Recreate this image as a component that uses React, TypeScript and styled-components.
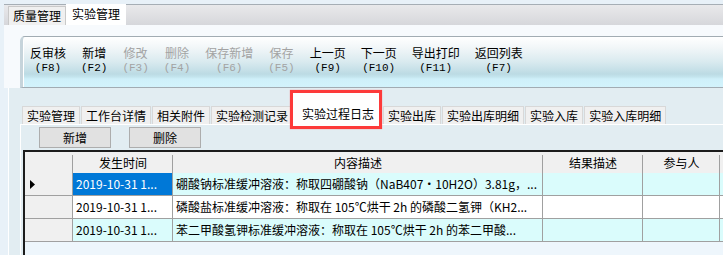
import React from "react";
import styled, { createGlobalStyle } from "styled-components";

const Global = createGlobalStyle`
  html, body {
    margin: 0;
    padding: 0;
  }
  body {
    font-family: "Noto Sans CJK SC", "Liberation Sans", sans-serif;
    font-size: 12px;
    color: #000;
    background: #e8f1f8;
  }
`;

const Root = styled.div`
  width: 723px;
  height: 255px;
  overflow: hidden;
  padding-left: 4px;
  box-sizing: border-box;
  display: flex;
  flex-direction: column;
  background: #e8f1f8;
`;

const TopBar = styled.div`
  margin-top: 4px;
  height: 21px;
  box-sizing: border-box;
  border-top: 1px solid #a6aeb5;
  background: linear-gradient(#e9e9eb, #d6d7db);
  display: flex;
  align-items: flex-end;
  padding-left: 4px;
`;

const TopTab = styled.div<{ $active?: boolean }>`
  height: ${(p) => (p.$active ? "21px" : "19px")};
  margin-top: ${(p) => (p.$active ? "-1px" : "0")};
  line-height: ${(p) => (p.$active ? "20px" : "18px")};
  padding: 0 ${(p) => (p.$active ? "6px" : "4px")};
  box-sizing: border-box;
  background: ${(p) => (p.$active ? "#ffffff" : "#f0f0f0")};
  border: ${(p) => (p.$active ? "none" : "1px solid #c9c9c9")};
  border-bottom: none;
  font-size: 12px;
`;

const ToolbarArea = styled.div`
  height: 63px;
  box-sizing: border-box;
  padding: 11px 0 0 16px;
  background: #f7fafd;
`;

const Toolbar = styled.div`
  height: 52px;
  box-sizing: border-box;
  border-top: 1px solid #a2acb3;
  border-bottom: 1px solid #a2acb3;
  border-left: 3px solid #c6d4db;
  border-top-left-radius: 5px;
  box-shadow: inset 1px 0 0 #ffffff;
  background: linear-gradient(
    #ffffff 0%,
    #f1f6f8 22%,
    #d9eaef 50%,
    #bcdbe4 74%,
    #c4e5ee 80%,
    #cff0fa 84%,
    #d3f3fc 100%
  );
  display: flex;
  align-items: flex-start;
  gap: 15px;
  padding: 8px 0 0 7px;
`;

const ToolButton = styled.div<{ $disabled?: boolean }>`
  display: flex;
  flex-direction: column;
  align-items: center;
  color: ${(p) => (p.$disabled ? "#a3a3a3" : "#000")};
`;

const ToolLabel = styled.span`
  display: block;
  font-size: 12px;
  line-height: 16px;
  white-space: nowrap;
`;

const ToolKey = styled.span`
  display: block;
  margin-top: 1px;
  font-family: "Liberation Mono", "DejaVu Sans Mono", monospace;
  font-size: 11px;
  line-height: 12px;
  white-space: nowrap;
`;

const Lower = styled.div`
  flex: 1;
  margin-left: 4px;
  border-left: 1px solid #ffffff;
  background: #e2edf2;
  display: flex;
  flex-direction: column;
  padding-top: 18px;
  min-height: 0;
`;

const SubTabs = styled.div`
  height: 18px;
  margin-left: 13px;
  display: flex;
  align-items: flex-end;
  gap: 1px;
`;

const SubTab = styled.div`
  height: 18px;
  box-sizing: border-box;
  padding: 0 4px;
  line-height: 17px;
  background: #f0f0f0;
  border: 1px solid #d8d8d8;
  border-bottom: none;
  white-space: nowrap;
`;

const ActiveSubTab = styled.div`
  position: relative;
  z-index: 1;
  height: 21px;
  box-sizing: border-box;
  margin-left: 1px;
  padding: 0 8px 0 7px;
  line-height: 21px;
  background: #ffffff;
  white-space: nowrap;

  &::before {
    content: "";
    position: absolute;
    left: -5px;
    top: -13px;
    width: 92px;
    height: 39px;
    box-sizing: border-box;
    background: #ffffff;
    z-index: -1;
  }

  &::after {
    content: "";
    position: absolute;
    left: -5px;
    top: -13px;
    width: 92px;
    height: 39px;
    box-sizing: border-box;
    border: 3px solid #fd3a3a;
    box-shadow: 0 0 1px rgba(255, 60, 60, 0.6);
  }
`;

const Page = styled.div`
  flex: 1;
  margin-left: 11px;
  border-top: 1px solid #ffffff;
  border-left: 1px solid #ffffff;
  padding-top: 2px;
  display: flex;
  flex-direction: column;
  min-height: 0;
`;

const ButtonRow = styled.div`
  display: flex;
  gap: 18px;
  padding-left: 18px;
`;

const PlainButton = styled.div`
  width: 72px;
  height: 21px;
  box-sizing: border-box;
  border: 1px solid #adadad;
  background: #e1e1e1;
  text-align: center;
  line-height: 19px;
`;

const Grid = styled.div`
  flex: 1;
  margin: 2px 0 0 2px;
  border-top: 2px solid #1c1c1c;
  border-left: 2px solid #1c1c1c;
  background: #eef6fc;
  display: grid;
  grid-template-columns: 48px 100px 370px 100px 77px 40px;
  grid-template-rows: 21px repeat(3, 23px);
  align-content: start;
`;

const HeadCell = styled.div<{ $sep?: boolean }>`
  background: ${(p) =>
    p.$sep
      ? "linear-gradient(#a0a0a0, #a0a0a0) right 3px / 1px calc(100% - 3px) no-repeat, #f0f0f0"
      : "#f0f0f0"};
  text-align: center;
  line-height: 21px;
  white-space: nowrap;
  overflow: hidden;
`;

const RowHead = styled.div`
  background: #f0f0f0;
  border-right: 1px solid #a0a0a0;
  border-bottom: 1px solid #a0a0a0;
  display: flex;
  align-items: center;
  padding-left: 5px;
`;

const Cell = styled.div<{ $bg: string; $selected?: boolean }>`
  background: ${(p) => (p.$selected ? "#0078d7" : p.$bg)};
  color: ${(p) => (p.$selected ? "#ffffff" : "#000")};
  border-right: 1px solid #a0a0a0;
  border-bottom: 1px solid #a0a0a0;
  padding-left: 3px;
  line-height: 22px;
  white-space: nowrap;
  overflow: hidden;
`;

const tools = [
  { label: "反审核", key: "(F8)" },
  { label: "新增", key: "(F2)" },
  { label: "修改", key: "(F3)", disabled: true },
  { label: "删除", key: "(F4)", disabled: true },
  { label: "保存新增", key: "(F6)", disabled: true },
  { label: "保存", key: "(F5)", disabled: true },
  { label: "上一页", key: "(F9)" },
  { label: "下一页", key: "(F10)" },
  { label: "导出打印", key: "(F11)" },
  { label: "返回列表", key: "(F7)" },
];

const tabsBefore = ["实验管理", "工作台详情", "相关附件", "实验检测记录"];
const tabsAfter = ["实验出库", "实验出库明细", "实验入库", "实验入库明细"];

const rows = [
  {
    date: "2019-10-31 1...",
    text: "硼酸钠标准缓冲溶液：称取四硼酸钠（NaB407·10H2O）3.81g，...",
    bg: "#dafcfc",
  },
  {
    date: "2019-10-31 1...",
    text: "磷酸盐标准缓冲溶液：称取在 105℃烘干 2h 的磷酸二氢钾（KH2...",
    bg: "#ffffff",
  },
  {
    date: "2019-10-31 1...",
    text: "苯二甲酸氢钾标准缓冲溶液：称取在 105℃烘干 2h 的苯二甲酸...",
    bg: "#dafcfc",
  },
];

const Arrow = () => (
  <svg width="6" height="9" viewBox="0 0 6 9">
    <polygon points="0,0 5,4.5 0,9" fill="#000" />
  </svg>
);

const App = () => {
  return (
    <Root>
      <Global />
      <TopBar>
        <TopTab>质量管理</TopTab>
        <TopTab $active>实验管理</TopTab>
      </TopBar>
      <ToolbarArea>
        <Toolbar>
          {tools.map((t) => (
            <ToolButton key={t.label} $disabled={t.disabled}>
              <ToolLabel>{t.label}</ToolLabel>
              <ToolKey>{t.key}</ToolKey>
            </ToolButton>
          ))}
        </Toolbar>
      </ToolbarArea>
      <Lower>
        <SubTabs>
          {tabsBefore.map((t) => (
            <SubTab key={t}>{t}</SubTab>
          ))}
          <ActiveSubTab>实验过程日志</ActiveSubTab>
          {tabsAfter.map((t) => (
            <SubTab key={t}>{t}</SubTab>
          ))}
        </SubTabs>
        <Page>
          <ButtonRow>
            <PlainButton>新增</PlainButton>
            <PlainButton>删除</PlainButton>
          </ButtonRow>
          <Grid>
            <HeadCell $sep />
            <HeadCell $sep>发生时间</HeadCell>
            <HeadCell $sep>内容描述</HeadCell>
            <HeadCell $sep>结果描述</HeadCell>
            <HeadCell $sep>参与人</HeadCell>
            <HeadCell />
            {rows.map((r, i) => (
              <React.Fragment key={i}>
                <RowHead>{i === 0 && <Arrow />}</RowHead>
                <Cell $bg={r.bg} $selected={i === 0}>
                  {r.date}
                </Cell>
                <Cell $bg={r.bg}>{r.text}</Cell>
                <Cell $bg={r.bg} />
                <Cell $bg={r.bg} />
                <Cell $bg={r.bg} />
              </React.Fragment>
            ))}
          </Grid>
        </Page>
      </Lower>
    </Root>
  );
};

export default App;
